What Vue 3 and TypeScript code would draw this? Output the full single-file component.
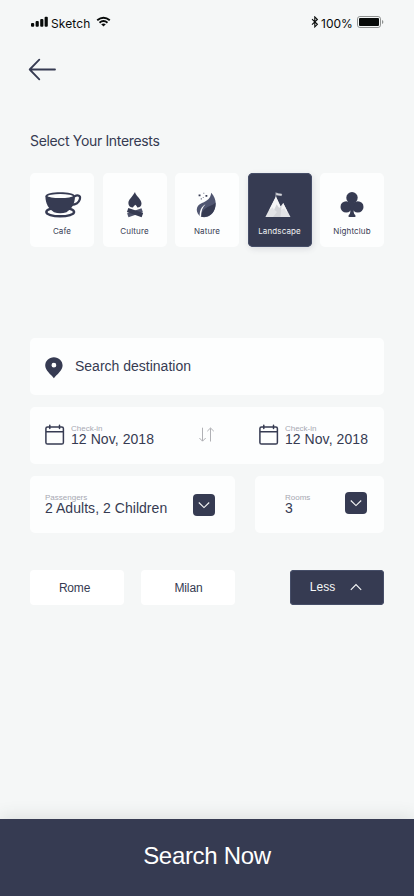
<script setup lang="ts">
import { ref } from 'vue'

type Interest = 'Cafe' | 'Culture' | 'Nature' | 'Landscape' | 'Nightclub'

const interests: Interest[] = ['Cafe', 'Culture', 'Nature', 'Landscape', 'Nightclub']
const selected = ref<Interest>('Landscape')
const date = '12 Nov, 2018'
</script>

<template>
  <main class="screen">
    <header class="status">
      <div class="carrier">
        <svg class="signal" width="17" height="11" viewBox="0 0 17 11">
          <rect x="0" y="7" width="3.2" height="3.8" rx="1" />
          <rect x="4.6" y="5.1" width="3.2" height="5.7" rx="1" />
          <rect x="9.2" y="3" width="3.2" height="7.8" rx="1" />
          <rect x="13.6" y="0.8" width="3.2" height="10" rx="1" />
        </svg>
        <span class="carrier-name">Sketch</span>
        <svg class="wifi" width="15" height="11" viewBox="0 0 15 11">
          <path d="M1.2 4.3Q7.5 -1 13.8 4.3M3.5 6.7Q7.5 3.4 11.5 6.7" fill="none" stroke="#080b0a" stroke-width="1.9" />
          <path d="M5.2 8.3Q7.5 6.5 9.8 8.3L7.5 10.6Z" />
        </svg>
      </div>
      <div class="power">
        <svg class="bluetooth" width="8" height="12" viewBox="0 0 8 12">
          <path d="M1 3.2L6.4 8.3L3.8 10.9V0.9L6.4 3.5L1 8.6" fill="none" stroke="#080b0a" stroke-width="1.1" />
        </svg>
        <span class="percent">100%</span>
        <svg class="battery" width="27" height="12" viewBox="0 0 27 12">
          <rect x="0.5" y="0.5" width="23" height="11" rx="2.4" fill="none" stroke="#8f9291" />
          <rect x="2" y="2" width="20" height="8" rx="1" />
          <path d="M25 4Q26.4 4.5 26.4 6T25 8Z" fill="#8f9291" />
        </svg>
      </div>
    </header>

    <button class="back" aria-label="Back">
      <svg width="28" height="23" viewBox="0 0 28 23">
        <path d="M11.3 1.7L1.7 11.5L11.3 21.3M1.7 11.5H27" fill="none" stroke="#363b52" stroke-width="1.8" stroke-linecap="round" stroke-linejoin="round" />
      </svg>
    </button>

    <h1 class="heading">Select Your Interests</h1>

    <section class="interests">
      <button
        v-for="item in interests"
        :key="item"
        class="interest"
        :class="{ active: item === selected }"
        @click="selected = item"
      >
        <span class="picture">
          <svg v-if="item === 'Cafe'" class="cup" width="38" height="26" viewBox="0 0 38 26">
            <ellipse cx="15.2" cy="20" rx="13.9" ry="4.3" fill="none" stroke="#363b52" stroke-width="2.4" />
            <path d="M0.4 4.3C0.4 -1 30 -1 30 4.3C30 12 26.5 17 21.5 20.2Q15.2 22.4 9 20.2C3.8 17 0.4 12 0.4 4.3Z" fill="#363b52" />
            <ellipse cx="15.2" cy="4.1" rx="12.6" ry="2" fill="#fdfefe" />
            <path d="M29.2 4.6C33 2.4 36 3.6 34.8 7.3C33.8 10.5 30.5 12.6 26.4 12.8" fill="none" stroke="#363b52" stroke-width="2.2" />
          </svg>
          <svg v-else-if="item === 'Culture'" width="18" height="26" viewBox="0 0 18 26">
            <path d="M9 0.1C9.2 3.5 15.5 7.2 15.5 11.4C15.5 14 13.8 15.3 11.3 15.6C11.2 14.6 10.5 13.8 9.3 12.7C8.3 14 7 14.6 7 15.6C4.3 15.3 2.4 14 2.4 11.2C2.4 7.6 5.6 6 9 0.1Z" fill="#363b52" />
            <path d="M1.8 23.2L16.2 18.2" stroke="#4e536b" stroke-width="4.2" />
            <path d="M1.6 18L16.4 23.2" stroke="#363b52" stroke-width="4.4" />
          </svg>
          <svg v-else-if="item === 'Nature'" class="leaf" width="20" height="26" viewBox="0 0 20 26">
            <path d="M15.2 0.8C19.8 6 20.8 12 18.5 17.5C16.4 23 11.3 26.4 5 24.8C-1.2 20.8 -0.4 13.4 6 11C11.3 9 14.6 6.5 15.2 0.8Z" fill="#505671" />
            <path d="M19.5 10.5C20 18.5 15.5 26 5 24.8C4.8 21 7.8 17 12 14.8C15.7 13.3 18.2 12.6 19.5 10.5Z" fill="#363b52" />
            <path d="M3.8 24.4C3.3 19.5 5.2 14.6 9.5 12.3C6.5 15.2 5 19.4 5.1 24.9Z" fill="#fdfefe" />
            <path d="M2.6 2.4h1.9v1.9H2.6zM9.5 3h1.8v1.8H9.5z" fill="#363b52" />
            <path d="M4.7 6.2h1.3v1.3H4.7zM7.3 0.8h1v1h-1zM6.8 5h.9v.9h-.9z" fill="#777c90" />
          </svg>
          <svg v-else-if="item === 'Landscape'" class="mountain" width="26" height="26" viewBox="0 0 26 26">
            <path d="M10.9 4.5L0.4 25H25.5L18.2 11L15.6 14.6Z" fill="#e2e3e6" />
            <path d="M10.9 8L16.4 16L15.5 25H8L12 20L9.2 17.4L11.4 13Z" fill="#d3d4d8" />
            <path d="M10.9 4.5L4.2 18L7.8 15.2L8.9 18L11.6 12.2L14.2 16L15.6 14.6Z" fill="#f6f6f7" />
            <path d="M18.2 11L16.1 18L19.1 16.4L21.5 20L22.2 19.2Z" fill="#f5f5f6" />
            <path d="M10.9 5V0.4M11.5 1.1L13.7 1.8L16.7 2.1L16.4 3.6L11.5 2.9Z" fill="#d4d5da" stroke="#d4d5da" stroke-width="0.6" />
          </svg>
          <svg v-else width="24" height="26" viewBox="0 0 24 26">
            <g fill="#363b52">
              <circle cx="12" cy="5.8" r="5.7" />
              <circle cx="6.2" cy="14.9" r="5.7" />
              <circle cx="17.8" cy="14.9" r="5.7" />
              <path d="M9.3 9H14.7L14 14.5C13.3 19 13.4 22 15.4 23.2V25H8.6V23.2C10.6 22 10.7 19 10 14.5Z" />
            </g>
          </svg>
        </span>
        <span class="interest-name">{{ item }}</span>
      </button>
    </section>

    <section class="form">
      <div class="card destination">
        <svg width="18" height="22" viewBox="0 0 18 22">
          <path fill-rule="evenodd" d="M8.9 0.2C13.8 0.2 17.6 3.8 17.6 8.6C17.6 13.7 11.8 17.6 8.9 21.2C6 17.6 0.2 13.7 0.2 8.6C0.2 3.8 4 0.2 8.9 0.2ZM8.9 5.8A2.4 2.4 0 1 0 8.9 10.6A2.4 2.4 0 1 0 8.9 5.8Z" fill="#363b52" />
        </svg>
        <span class="value">Search destination</span>
      </div>

      <div class="card dates">
        <template v-for="side in 2" :key="side">
          <div class="date">
            <svg class="calendar" width="20" height="21" viewBox="0 0 20 21">
              <path d="M2.8 3H16.8Q18.4 3 18.4 4.6V18.5Q18.4 20.1 16.8 20.1H2.5Q0.9 20.1 0.9 18.5V4.6Q0.9 3 2.5 3ZM0.9 7.8H18.4M4.8 1.3V4.5M14.5 1.3V4.5" fill="none" stroke="#363b52" stroke-width="1.5" stroke-linecap="round" />
            </svg>
            <div class="field">
              <span class="label">Check-in</span>
              <span class="value">{{ date }}</span>
            </div>
          </div>
          <svg v-if="side === 1" class="swap" width="16" height="16" viewBox="0 0 16 16">
            <path d="M3.5 0.7V14M0.4 11L3.5 14.2L6.7 11M11.5 14.5V1.2M8.3 4.2L11.5 1L14.8 4.2" fill="none" stroke="#b0b1b5" stroke-width="1" />
          </svg>
        </template>
      </div>

      <div class="guests">
        <div class="card passengers">
          <div class="field">
            <span class="label">Passengers</span>
            <span class="value">2 Adults, 2 Children</span>
          </div>
          <button class="drop" aria-label="Choose passengers">
            <svg width="12" height="8" viewBox="0 0 12 8">
              <path d="M0.8 1.5L6 6.6L11.2 1.5" fill="none" stroke="#f7f8f8" stroke-width="1.1" />
            </svg>
          </button>
        </div>
        <div class="card rooms">
          <div class="field">
            <span class="label">Rooms</span>
            <span class="value">3</span>
          </div>
          <button class="drop" aria-label="Choose rooms">
            <svg width="12" height="8" viewBox="0 0 12 8">
              <path d="M0.8 1.5L6 6.6L11.2 1.5" fill="none" stroke="#f7f8f8" stroke-width="1.1" />
            </svg>
          </button>
        </div>
      </div>
    </section>

    <section class="chips">
      <button class="chip rome">Rome</button>
      <button class="chip milan">Milan</button>
      <button class="chip less">
        <span>Less</span>
        <svg width="12" height="8" viewBox="0 0 12 8">
          <path d="M0.8 6.9L6 1.6L11.2 6.9" fill="none" stroke="#f7f8f8" stroke-width="1.1" />
        </svg>
      </button>
    </section>

    <button class="search">Search Now</button>
  </main>
</template>

<style>
body {
  background: #f5f7f7;
}
</style>

<style scoped>
.screen {
  box-sizing: border-box;
  width: 414px;
  height: 896px;
  display: flex;
  flex-direction: column;
  overflow: hidden;
  background: #f5f7f7;
  color: #363b52;
  font-family: "Liberation Sans", Arial, sans-serif;
}

button {
  padding: 0;
  border: 0;
  background: none;
  color: inherit;
  font: inherit;
}

svg {
  display: block;
  flex: none;
}

.status {
  display: flex;
  justify-content: space-between;
  height: 32px;
  padding: 16px 31px 0;
  box-sizing: border-box;
  color: #080b0a;
  fill: #080b0a;
  font: 12px/15px Inter, sans-serif;
}

.carrier,
.power {
  display: flex;
  align-items: flex-start;
}

.carrier-name {
  margin-left: 3px;
  width: 39px;
  letter-spacing: 0.1px;
}

.wifi {
  margin-left: 6px;
}

.power {
  margin-right: -1px;
}

.percent {
  margin-left: 2px;
  width: 32px;
}

.battery {
  margin-left: 4px;
}

.back {
  width: 28px;
  height: 23px;
  margin: 26px 0 0 28px;
}

.heading {
  margin: 51px 0 0 30px;
  font: 400 14px/18px Inter, sans-serif;
  letter-spacing: -0.34px;
}

.interests {
  display: flex;
  justify-content: space-between;
  margin: 23px 30px 0;
}

.interest {
  display: flex;
  flex-direction: column;
  align-items: center;
  width: 64px;
  height: 74px;
  padding-top: 19px;
  border-radius: 5px;
  background: #fdfefe;
}

.interest.active {
  background: #363b52;
  color: #f1f2f4;
  box-shadow: inset 0 0 0 1px #464e68, 1px 2px 6px rgba(54, 59, 82, 0.14);
}

.picture {
  height: 26px;
}

.cup {
  margin-left: 4px;
}

.leaf {
  margin-right: 2px;
}

.mountain {
  margin-right: 3px;
}

.interest-name {
  margin-top: 8px;
  font: 8px/10px Inter, sans-serif;
  letter-spacing: 0.12px;
}

.form {
  display: flex;
  flex-direction: column;
  gap: 12px;
  margin: 91px 30px 0;
}

.card {
  display: flex;
  box-sizing: border-box;
  height: 57px;
  border-radius: 5px;
  background: #fdfefe;
}

.destination {
  align-items: flex-start;
  gap: 12px;
  padding: 19px 15px 0;
}

.value {
  font-size: 14px;
  line-height: 16px;
  white-space: nowrap;
}

.destination .value {
  margin-top: 1px;
}

.dates {
  justify-content: space-between;
  padding: 17px 16px 0 15px;
}

.dates .value {
  letter-spacing: 0.07px;
}

.date {
  display: flex;
  gap: 6px;
}

.field {
  display: flex;
  flex-direction: column;
}

.label {
  height: 7px;
  color: #a6a8b2;
  font-size: 8px;
  line-height: 9px;
}

.swap {
  margin-top: 3px;
}

.guests {
  display: flex;
  gap: 20px;
}

.passengers {
  justify-content: space-between;
  width: 205px;
  padding: 17px 20px 0 15px;
}

.passengers .value {
  letter-spacing: 0.04px;
}

.rooms {
  justify-content: space-between;
  width: 129px;
  padding: 17px 17px 0 30px;
}

.drop {
  display: flex;
  align-items: center;
  justify-content: center;
  width: 22px;
  height: 22px;
  border-radius: 4px;
  background: #363b52;
}

.passengers .drop {
  margin-top: 1px;
}

.rooms .drop {
  margin-top: -1px;
}

.chips {
  display: flex;
  margin: 37px 30px 0;
}

.chip {
  width: 94px;
  height: 35px;
  border-radius: 4px;
  background: #fff;
  font-size: 12px;
}

.rome {
  padding-right: 5px;
  letter-spacing: -0.2px;
}

.milan {
  margin-left: 17px;
  padding-left: 1px;
  letter-spacing: -0.1px;
}

.less {
  display: flex;
  align-items: center;
  justify-content: center;
  gap: 15px;
  margin-left: auto;
  padding: 0 2px 1px 0;
  box-sizing: border-box;
  background: #363b52;
  color: #f7f8f8;
  box-shadow: inset 0 0 0 1px #464e68;
}

.search {
  height: 77px;
  margin-top: auto;
  padding-bottom: 3px;
  background: #363b52;
  color: #fff;
  font-size: 24px;
  letter-spacing: -0.3px;
  box-shadow: 0 -2px 16px rgba(54, 66, 62, 0.13);
}
</style>
